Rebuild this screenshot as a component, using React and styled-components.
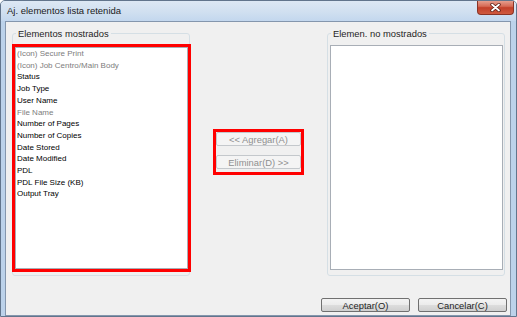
import React from "react";
import styled, { createGlobalStyle } from "styled-components";

const shownItems = [
  { label: "(Icon) Secure Print", muted: true },
  { label: "(Icon) Job Centro/Main Body", muted: true },
  { label: "Status" },
  { label: "Job Type" },
  { label: "User Name" },
  { label: "File Name", muted: true },
  { label: "Number of Pages" },
  { label: "Number of Copies" },
  { label: "Date Stored" },
  { label: "Date Modified" },
  { label: "PDL" },
  { label: "PDL File Size (KB)" },
  { label: "Output Tray" },
];

const GlobalStyle = createGlobalStyle`
  html, body {
    margin: 0;
    padding: 0;
    background: #ffffff;
  }
  body {
    font-family: "Liberation Sans", Arial, sans-serif;
  }
`;

const Window = styled.div`
  width: 517px;
  height: 317px;
  box-sizing: border-box;
  display: flex;
  flex-direction: column;
  border: 1px solid #62758c;
  border-radius: 5px 5px 0 0;
  background: #bcd2ea;
  overflow: hidden;
`;

const TitleBar = styled.div`
  height: 20px;
  flex: none;
  display: flex;
  align-items: flex-start;
  padding-left: 6px;
  padding-right: 2px;
  background: linear-gradient(to bottom, #dde8f4 0%, #cfdff0 60%, #c3d7ee 100%);
`;

const Title = styled.div`
  flex: 1;
  font-size: 9.5px;
  line-height: 20px;
  color: #1b1b1b;
  white-space: nowrap;
`;

const CloseButton = styled.div`
  width: 37px;
  height: 15px;
  margin-top: -1px;
  box-sizing: border-box;
  display: flex;
  align-items: center;
  justify-content: center;
  border: 1px solid #8a3325;
  border-top: none;
  border-radius: 0 0 4px 4px;
  background: linear-gradient(to bottom, #e8a898 0%, #d66a55 45%, #c2402a 55%, #cf5a3f 100%);
`;

const Frame = styled.div`
  flex: 1;
  display: flex;
  padding: 0 5px 0 4px;
`;

const Client = styled.div`
  flex: 1;
  display: flex;
  flex-direction: column;
  border: 1px solid #8496ad;
  background: #f0f0f0;
`;

const Panels = styled.div`
  display: flex;
  margin-top: 6px;
  padding: 0 5px 0 6px;
`;

const GroupBox = styled.fieldset`
  width: 178px;
  height: 248px;
  box-sizing: border-box;
  margin: 0;
  min-inline-size: 0;
  display: flex;
  flex-direction: column;
  padding: 6px 1px 5px 2px;
  border: 1px solid #d5dfe5;
  border-radius: 3px;
`;

const Caption = styled.legend`
  margin-left: 1px;
  padding: 0 2px;
  font-size: 9.4px;
  line-height: 11px;
  color: #1e1e1e;
`;

/* red annotation frame drawn round the highlighted controls */
const Highlight = styled.div`
  flex: ${(p) => (p.$list ? 1 : "none")};
  display: flex;
  flex-direction: column;
  border: 3px solid #ff0000;
  margin: ${(p) => (p.$list ? "-1px -3px -2px -3px" : "0")};
`;

const ListBox = styled.div`
  flex: 1;
  background: #ffffff;
  border: 1px solid #a8aeb6;
  overflow: hidden;
`;

const ListItem = styled.div`
  padding-left: 1px;
  font-size: 8px;
  line-height: 11.7px;
  white-space: nowrap;
  color: ${(p) => (p.$muted ? "#7d7d7d" : "#000000")};
`;

const Middle = styled.div`
  flex: 1;
  display: flex;
  align-items: center;
  justify-content: center;
`;

const ButtonStack = styled.div`
  width: 85px;
  display: flex;
  flex-direction: column;
  gap: 9px;
  padding-bottom: 3px;
`;

const Button = styled.div`
  height: 14px;
  width: ${(p) => (p.$wide ? "89px" : "auto")};
  box-sizing: border-box;
  display: flex;
  align-items: center;
  justify-content: center;
  font-size: 9.4px;
  white-space: nowrap;
  border-radius: 2px;
  border: 1px solid ${(p) => (p.$disabled ? "#c4c8cc" : "#707070")};
  color: ${(p) => (p.$disabled ? "#8f8f8f" : "#1e1e1e")};
  background: ${(p) =>
    p.$disabled
      ? "#f4f4f4"
      : "linear-gradient(to bottom, #f3f3f3 0%, #ebebeb 50%, #dddddd 51%, #cfcfcf 100%)"};
`;

const Footer = styled.div`
  margin-top: auto;
  display: flex;
  justify-content: flex-end;
  gap: 8px;
  padding: 0 3px 3px 0;
`;

const CloseGlyph = () => (
  <svg width="11" height="9" viewBox="0 0 11 9">
    <path d="M2 1.5 L9 7.5 M9 1.5 L2 7.5" stroke="#5a1c12" strokeWidth="3.4" strokeLinecap="round" />
    <path d="M2 1.5 L9 7.5 M9 1.5 L2 7.5" stroke="#ffffff" strokeWidth="1.8" strokeLinecap="round" />
  </svg>
);

const App = () => {
  return (
    <>
      <GlobalStyle />
      <Window>
        <TitleBar>
          <Title>Aj. elementos lista retenida</Title>
          <CloseButton>
            <CloseGlyph />
          </CloseButton>
        </TitleBar>
        <Frame>
          <Client>
            <Panels>
              <GroupBox>
                <Caption>Elementos mostrados</Caption>
                <Highlight $list>
                  <ListBox>
                    {shownItems.map((item) => (
                      <ListItem key={item.label} $muted={item.muted}>
                        {item.label}
                      </ListItem>
                    ))}
                  </ListBox>
                </Highlight>
              </GroupBox>
              <Middle>
                <Highlight>
                  <ButtonStack>
                    <Button $disabled>&lt;&lt; Agregar(A)</Button>
                    <Button $disabled>Eliminar(D) &gt;&gt;</Button>
                  </ButtonStack>
                </Highlight>
              </Middle>
              <GroupBox>
                <Caption>Elemen. no mostrados</Caption>
                <ListBox />
              </GroupBox>
            </Panels>
            <Footer>
              <Button $wide>Aceptar(O)</Button>
              <Button $wide>Cancelar(C)</Button>
            </Footer>
          </Client>
        </Frame>
      </Window>
    </>
  );
};

export default App;
